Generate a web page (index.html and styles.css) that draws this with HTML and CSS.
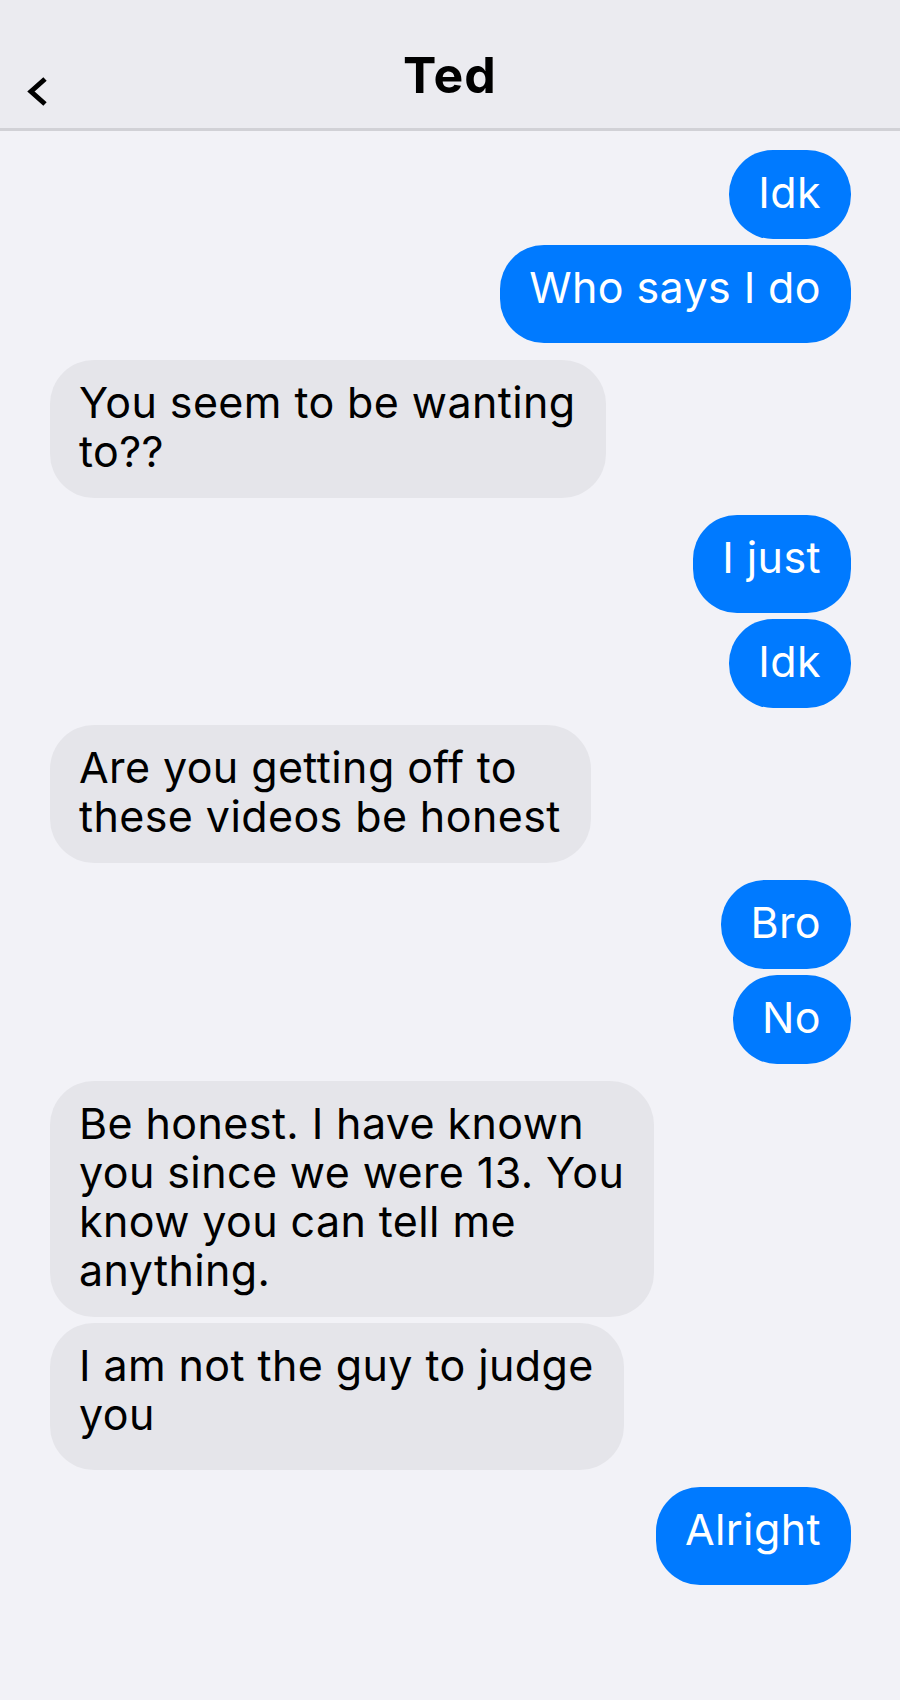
FILE: index.html
```html
<!DOCTYPE html>
<html>
<head>
    <title>Ted</title>
    <link rel="stylesheet" href="styles.css">
</head>
<body>
    <div class="topbar">
        <a class="back" href="#">
            <svg width="24" height="30" viewBox="0 0 24 30">
                <path d="M19 2 L5 14.5 L19 27" fill="none" stroke="#000" stroke-width="5"/>
            </svg>
        </a>
        <h1>Ted</h1>
    </div>

    <div class="thread">
        <div class="msg sent">Idk</div>
        <div class="msg sent tall">Who says I do</div>
        <div class="msg recv">You seem to be wanting<br>to??</div>
        <div class="msg sent tall">I just</div>
        <div class="msg sent">Idk</div>
        <div class="msg recv">Are you getting off to<br>these videos be honest</div>
        <div class="msg sent">Bro</div>
        <div class="msg sent">No</div>
        <div class="msg recv">Be honest. I have known<br>you since we were 13. You<br>know you can tell me<br>anything.</div>
        <div class="msg recv tall">I am not the guy to judge<br>you</div>
        <div class="msg sent tall">Alright</div>
    </div>
</body>
</html>
```

FILE: styles.css
```css
body {
    margin: 0;
    background-color: #f2f2f7;
    font-family: Inter, "Noto Sans", sans-serif;
    min-height: 1700px;
}
.topbar {
    position: relative;
    height: 128px;
    background-color: #ebebf0;
    border-bottom: 3px solid #d1d1d6;
    text-align: center;
}
.topbar h1 {
    margin: 0;
    padding-top: 45px;
    font-size: 50px;
    line-height: 60px;
    font-weight: 700;
    letter-spacing: 1px;
    color: #000;
}
.back {
    position: absolute;
    left: 26px;
    top: 77px;
    display: block;
    width: 24px;
    height: 30px;
}
.back svg {
    display: block;
}
.thread {
    display: flex;
    flex-direction: column;
    gap: 6px;
    padding: 19px 49px 40px 50px;
}
.msg {
    padding: 18px 30px 22px 29px;
    border-radius: 44px;
    font-size: 43px;
    line-height: 49px;
    letter-spacing: 0.4px;
    white-space: nowrap;
}
.msg.tall {
    padding-bottom: 31px;
}
.sent {
    align-self: flex-end;
    background-color: #007aff;
    color: #fff;
}
.recv {
    align-self: flex-start;
    background-color: #e5e5ea;
    color: #000;
}
.sent + .recv,
.recv + .sent {
    margin-top: 11px;
}
```
